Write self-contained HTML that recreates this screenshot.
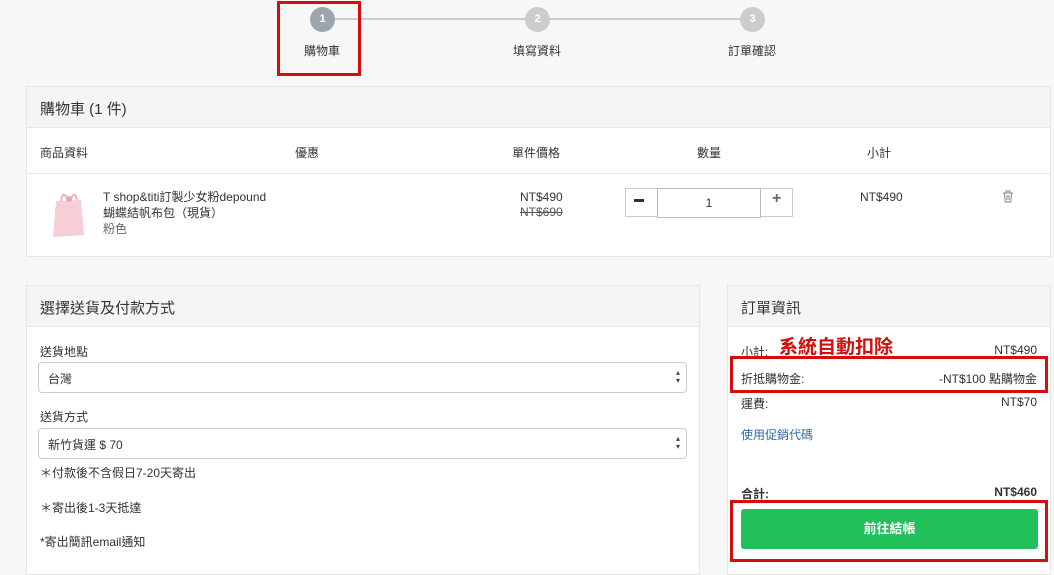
<!DOCTYPE html>
<html><head><meta charset="utf-8"><style>
*{box-sizing:border-box;margin:0;padding:0}
body{width:1054px;height:563px;overflow:hidden;background:#f7f7f8;font-family:"Liberation Sans","Noto Sans CJK TC",sans-serif;font-size:12px;color:#333;position:relative}
.a{position:absolute;white-space:nowrap}
.panel{position:absolute;background:#fff;border:1px solid #e6e6e6}
.hd{position:absolute;left:0;right:0;top:0;height:41px;background:#f5f5f5;border-bottom:1px solid #e6e6e6;font-size:15px;padding:11px 0 0 13px;color:#333}
.circ{position:absolute;width:25px;height:25px;border-radius:50%;background:#ccc;color:#fff;font-size:11px;font-weight:bold;text-align:center;line-height:25px}
.red{position:absolute;border:3px solid #d40d0d}
.sel{position:absolute;left:11px;width:649px;height:31px;border:1px solid #ccc;border-radius:4px;padding:7px 0 0 9px;font-size:12px}
.sel:after{content:"▴\A▾";white-space:pre;position:absolute;right:6px;top:6px;font-size:8px;line-height:8px;color:#444}
</style></head><body>
<div class="a" style="left:335px;top:18px;width:405px;height:2px;background:#ccc"></div>
<div class="circ" style="left:310px;top:7px;background:#9aa5ae">1</div>
<div class="circ" style="left:525px;top:7px">2</div>
<div class="circ" style="left:740px;top:7px">3</div>
<div class="a" style="left:304px;top:42px">購物車</div>
<div class="a" style="left:513px;top:42px">填寫資料</div>
<div class="a" style="left:728px;top:42px">訂單確認</div>
<div class="red" style="left:277px;top:1px;width:84px;height:75px"></div>

<div class="panel" style="left:26px;top:86px;width:1025px;height:171px">
<div class="hd">購物車 (1 件)</div>
<div class="a" style="left:13px;top:57px">商品資料</div>
<div class="a" style="left:268px;top:57px">優惠</div>
<div class="a" style="left:485px;top:57px">單件價格</div>
<div class="a" style="left:670px;top:57px">數量</div>
<div class="a" style="left:840px;top:57px">小計</div>
<div class="a" style="left:0;right:0;top:86px;height:1px;background:#e6e6e6"></div>
<svg class="a" style="left:20px;top:100px" width="42" height="52" viewBox="0 0 42 52"><path d="M14 14 Q16 2 20 12 M24 12 Q28 2 30 14" stroke="#eab4c0" fill="none" stroke-width="2"/><path d="M9 14 L34 13 L37 48 L6 50 Z" fill="#f7cdd6"/><circle cx="22" cy="12" r="3" fill="#e9a5b5"/></svg>
<div class="a" style="left:76px;top:102px;line-height:16px">T shop&amp;titi訂製少女粉depound<br>蝴蝶結帆布包（現貨）<br><span style="color:#666">粉色</span></div>
<div class="a" style="left:493px;top:103px;line-height:15px;text-align:center">NT$490<br><s style="color:#555">NT$690</s></div>
<div class="a" style="left:598px;top:101px;width:168px;height:29px;border:1px solid #ccc;background:#fff"></div>
<div class="a" style="left:630px;top:101px;width:104px;height:30px;border:1px solid #bbb;background:#fff;text-align:center;line-height:29px">1</div>
<div class="a" style="left:607px;top:112px;width:10px;height:3px;background:#333"></div>
<div class="a" style="left:745px;top:103px;font-size:16px;font-weight:bold;color:#666">+</div>
<div class="a" style="left:833px;top:103px">NT$490</div>
<svg class="a" style="left:975px;top:103px" width="12" height="13" viewBox="0 0 12 13"><path d="M1 3h10M4 3V1h4v2M2.5 3l.7 9h5.6l.7-9M5 5v5M7 5v5" stroke="#888" fill="none" stroke-width="1"/></svg>
</div>

<div class="panel" style="left:26px;top:285px;width:674px;height:290px">
<div class="hd">選擇送貨及付款方式</div>
<div class="a" style="left:13px;top:57px">送貨地點</div>
<div class="sel" style="top:76px">台灣</div>
<div class="a" style="left:13px;top:122px">送貨方式</div>
<div class="sel" style="top:142px">新竹貨運 $ 70</div>
<div class="a" style="left:13px;top:178px">＊付款後不含假日7-20天寄出</div>
<div class="a" style="left:13px;top:213px">＊寄出後1-3天抵達</div>
<div class="a" style="left:13px;top:247px">*寄出簡訊email通知</div>
</div>

<div class="panel" style="left:727px;top:285px;width:324px;height:290px">
<div class="hd">訂單資訊</div>
<div class="a" style="left:13px;top:57px">小計:</div>
<div class="a" style="left:51px;top:46px;color:#d40d0d;font-size:19px;font-weight:bold">系統自動扣除</div>
<div class="a" style="right:13px;top:57px">NT$490</div>
<div class="a" style="left:13px;top:84px">折抵購物金:</div>
<div class="a" style="right:13px;top:84px">-NT$100 點購物金</div>
<div class="a" style="left:13px;top:109px">運費:</div>
<div class="a" style="right:13px;top:109px">NT$70</div>
<div class="a" style="left:13px;top:140px;color:#2b6aa8">使用促銷代碼</div>
<div class="a" style="left:13px;top:199px;font-weight:bold">合計:</div>
<div class="a" style="right:13px;top:199px;font-weight:bold">NT$460</div>
<div class="a" style="left:13px;top:223px;width:297px;height:40px;background:#22c05a;border-radius:3px;color:#fff;font-weight:bold;font-size:13px;text-align:center;line-height:40px">前往結帳</div>
</div>
<div class="red" style="left:730px;top:356px;width:318px;height:37px"></div>
<div class="red" style="left:730px;top:500px;width:318px;height:62px"></div>
</body></html>
